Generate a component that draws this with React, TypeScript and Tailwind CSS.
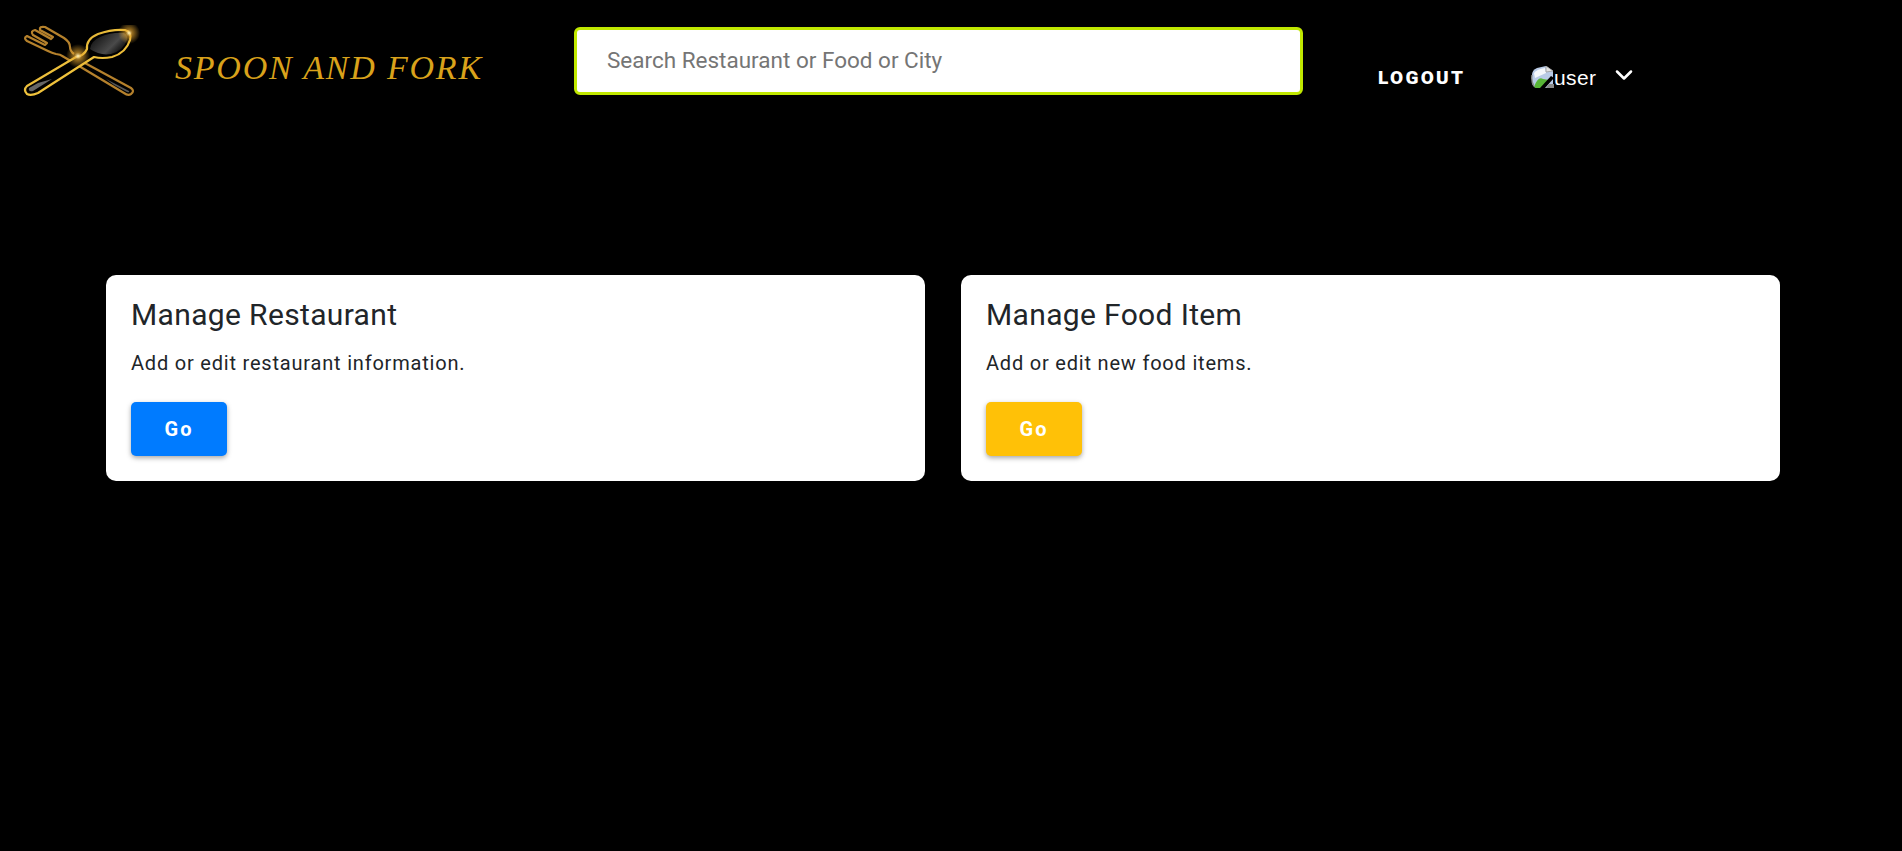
import React from "react";
import { ChevronDown } from "lucide-react";

const LogoMark = () => (
  <svg width="125" height="75" viewBox="20 25 125 75" className="shrink-0">
    <defs>
      <linearGradient id="gold" x1="0" y1="0" x2="1" y2="1">
        <stop offset="0" stopColor="#c08f2a" />
        <stop offset="0.5" stopColor="#f2c53d" />
        <stop offset="1" stopColor="#dba52c" />
      </linearGradient>
      <linearGradient id="steel" x1="0" y1="0" x2="1" y2="0.6">
        <stop offset="0" stopColor="#050505" />
        <stop offset="0.7" stopColor="#4a4a4a" />
        <stop offset="1" stopColor="#0c0c0c" />
      </linearGradient>
      <radialGradient id="glow">
        <stop offset="0" stopColor="#fff3c0" stopOpacity="1" />
        <stop offset="0.3" stopColor="#e8a830" stopOpacity="0.65" />
        <stop offset="1" stopColor="#e8a830" stopOpacity="0" />
      </radialGradient>
    </defs>
    {/* fork */}
    <path
      d="M83 62 L131 88 Q135 91 131 94 Q128 96 124 93 L64 57 Q60 54 56 54 Q52 53 48 51 L27 41 Q23 38 27 36 L45 45 L47 43 L33 35 Q30 31 35 30 L51 39 L53 37 L40 30 Q39 26 45 27 L64 38 Q70 42 70 47 Q70 51 74 54"
      fill="#000"
      stroke="#b5812c"
      strokeWidth="2.2"
      strokeLinejoin="round"
    />
    <path d="M106 79 L129 91 Q130 93 127 92 L114 85 Z" fill="#555" />
    {/* spoon */}
    <path
      d="M87 49 Q86 39 98 34 Q112 29 125 30 Q132 32 130 40 Q126 53 112 57 Q102 59 94 57 L38 93 Q31 96 27 94 Q23 90 27 86 L76 57 Q84 56 87 49 Z"
      fill="#000"
      stroke="url(#gold)"
      strokeWidth="2.2"
      strokeLinejoin="round"
    />
    <path d="M90 49 Q91 41 100 37 Q112 32 124 33 Q128 35 127 40 Q123 51 111 54 Q100 56 90 49 Z" fill="url(#steel)" />
    <path d="M52 79 L33 91 Q28 92 29 88 L38 83 Z" fill="#666" />
    <circle cx="78" cy="56" r="12" fill="url(#glow)" />
    <circle cx="129" cy="33" r="11" fill="url(#glow)" />
  </svg>
);

const BrokenImage = () => (
  <svg width="23" height="22" viewBox="0 0 23 22" className="shrink-0">
    <path d="M1 9 Q1 4 6 2 L15 0 L22 5 L22 22 L6 22 Q1 21 1 16 Z" fill="#b9cbe6" />
    <path d="M3 7 Q6 3 14 2 L15 7 L4 12 Z" fill="#f4f7fb" />
    <path d="M15 0 L22 5 L15 6 Z" fill="#e3e3e3" stroke="#9a9a9a" strokeWidth="0.8" />
    <path d="M3 21 Q7 10 12 13 L18 14 L10 22 L5 22 Z" fill="#57b536" />
    <path d="M20 10 L9 22 L14 22 L23 12 Z" fill="#000" />
    <path d="M18 18 L23 18 L23 22 L15 22 Z" fill="#8a8a8a" />
    <path d="M1 9 Q0 16 3 20" stroke="#8a8a8a" strokeWidth="1.4" fill="none" />
  </svg>
);

type CardProps = {
  title: string;
  text: string;
  buttonClass: string;
};

const ManageCard = ({ title, text, buttonClass }: CardProps) => (
  <div className="w-[819px] h-[206px] bg-white rounded-[10px] px-[25px] pt-[22px] text-[#212529]">
    <h4 className="text-[30px] leading-[36px] tracking-[0.35px] font-normal">{title}</h4>
    <p className="mt-[15px] text-[20px] leading-[30px] tracking-[0.8px]">{text}</p>
    <button
      className={`mt-[24px] w-[96px] h-[54px] rounded-[5px] text-white text-[20px] font-bold tracking-[2px] shadow-[0_2px_5px_rgba(0,0,0,0.35)] ${buttonClass}`}
    >
      Go
    </button>
  </div>
);

export default function App() {
  return (
    <div className="min-h-screen bg-black font-['Roboto',sans-serif]">
      <header className="flex items-start h-[275px]">
        <div className="ml-[20px] mt-[25px]">
          <LogoMark />
        </div>
        <span className="ml-[30px] mt-[45px] w-[399px] text-[34px] leading-[46px] text-[#d9a21b] italic tracking-[1.8px] whitespace-nowrap font-['Liberation_Serif',serif]">
          SPOON AND FORK
        </span>
        <input
          placeholder="Search Restaurant or Food or City"
          className="mt-[27px] w-[729px] h-[68px] shrink-0 bg-white border-[3px] border-[#c0e800] rounded-[6px] pl-[30px] pb-[2px] text-[22.5px] outline-none placeholder:text-[#757575]"
        />
        <a className="ml-[75px] mt-[66px] w-[85px] text-white text-[19px] leading-[24px] font-black tracking-[2.3px] whitespace-nowrap">
          LOGOUT
        </a>
        <div className="ml-[68px] mt-[66px] flex items-center h-[22px] text-white">
          <BrokenImage />
          <span className="mt-[2px] text-[21px] tracking-[0.4px] font-['Liberation_Sans',sans-serif]">user</span>
          <ChevronDown className="ml-[14px] mb-[4px]" size={28} strokeWidth={2.2} />
        </div>
      </header>
      <main className="flex gap-[36px] pl-[106px]">
        <ManageCard title="Manage Restaurant" text="Add or edit restaurant information." buttonClass="bg-[#007bff]" />
        <ManageCard title="Manage Food Item" text="Add or edit new food items." buttonClass="bg-[#ffc107]" />
      </main>
    </div>
  );
}
